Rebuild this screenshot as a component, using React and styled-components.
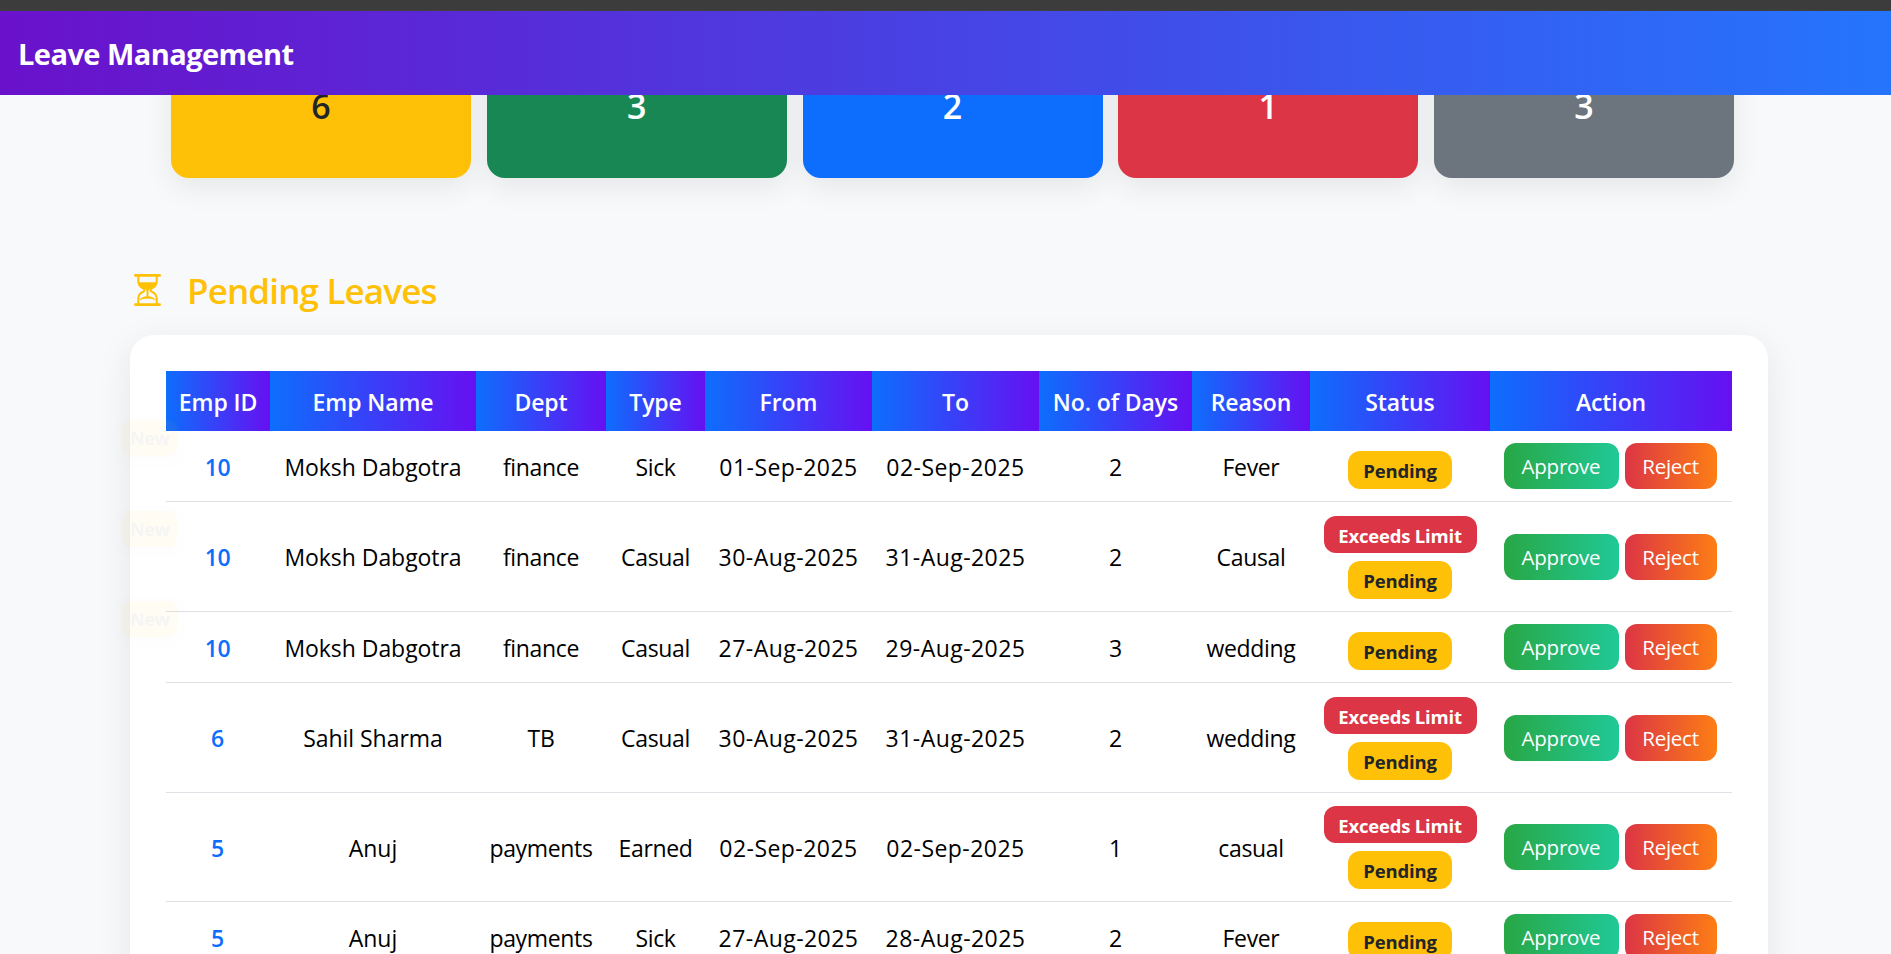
import React from "react";
import styled, { createGlobalStyle } from "styled-components";

const GlobalStyle = createGlobalStyle`
  * { box-sizing: border-box; }
  html, body { margin: 0; height: 100%; overflow: hidden; }
  body {
    background: #f8f9fb;
    color: #000;
    font-family: "Segoe UI", "Open Sans", "Noto Sans", sans-serif;
    font-size: 23px;
  }
`;

const Page = styled.div`
  height: 954px;
  overflow: hidden;
  display: flex;
  flex-direction: column;
`;

const WindowEdge = styled.div`
  flex: none;
  height: 11px;
  background: #3c3c3c;
  border-bottom: 1px solid #404040;
`;

const Navbar = styled.header`
  flex: none;
  height: 84px;
  padding: 0 18px;
  display: flex;
  align-items: center;
  background: linear-gradient(90deg, #6a11cb, #2575fc);
`;

const Brand = styled.h1`
  margin: 0;
  color: #fff;
  font-size: 29px;
  line-height: 40px;
  font-weight: 700;
  letter-spacing: -0.55px;
  padding-top: 1px;
`;

const Viewport = styled.main`
  flex: 1;
  min-height: 0;
  overflow: hidden;
  padding: 0 123px 0 130px;
`;

const Summary = styled.section`
  display: grid;
  grid-template-columns: repeat(5, 300px);
  justify-content: space-between;
  margin: -80px 34px 0 41px;
`;

const tones = {
  total: ["#ffc107", "#212529"],
  approved: ["#198754", "#fff"],
  info: ["#0d6efd", "#fff"],
  rejected: ["#dc3545", "#fff"],
  neutral: ["#6c757d", "#fff"],
};

const SummaryCard = styled.div`
  height: 163px;
  display: flex;
  justify-content: center;
  align-items: flex-end;
  padding-bottom: 49px;
  border-radius: 18px;
  background: ${(p) => tones[p.$tone][0]};
  color: ${(p) => tones[p.$tone][1]};
  box-shadow: 0 9px 30px rgba(0, 0, 0, 0.08);
  font-size: 34px;
  line-height: 46px;
  font-weight: 600;
`;

const SectionTitle = styled.h2`
  display: flex;
  align-items: center;
  margin: 86px 0 0;
  height: 53px;
  color: #ffc107;
  font-size: 35px;
  font-weight: 600;
  letter-spacing: -0.85px;
  line-height: 53px;
`;

const TitleIcon = styled.svg`
  width: 27px;
  height: 32px;
  margin: 0 26px 2px 4px;
`;

const Panel = styled.section`
  margin-top: 18px;
  padding: 36px;
  height: 700px;
  border-radius: 24px;
  background: #fff;
  box-shadow: 0 9px 36px rgba(0, 0, 0, 0.08);
`;

const columns = "104px 206px 130px 99px 167px 167px 153px 118px 180px 242px";

const HeadRow = styled.div`
  display: grid;
  grid-template-columns: ${columns};
  height: 60px;
`;

const HeadCell = styled.div`
  display: flex;
  align-items: center;
  justify-content: center;
  padding-top: 2px;
  background: linear-gradient(90deg, #0d6efd, #6610f2);
  color: #fff;
  font-weight: 600;
  letter-spacing: -0.1px;
  white-space: nowrap;
`;

const Row = styled.div`
  position: relative;
  display: grid;
  grid-template-columns: ${columns};
  height: ${(p) => p.$h}px;
  border-bottom: 1px solid #dee2e6;
`;

const Cell = styled.div`
  display: flex;
  align-items: center;
  justify-content: center;
  padding-top: 1px;
  letter-spacing: ${(p) => (p.$kind === "date" ? 0.45 : p.$kind === "name" ? -0.05 : -0.35)}px;
  white-space: nowrap;
`;

const IdCell = styled(Cell)`
  padding-right: 1px;
  color: #0d6efd;
  font-weight: 600;
`;

const StatusCell = styled.div`
  display: flex;
  flex-direction: column;
  align-items: center;
  justify-content: flex-end;
  gap: 8px;
  padding-bottom: 12px;
`;

const Badge = styled.span`
  display: flex;
  align-items: center;
  justify-content: center;
  width: ${(p) => (p.$danger ? 153 : 104)}px;
  height: ${(p) => (p.$danger ? 37 : 38)}px;
  padding-top: 1px;
  border-radius: 12px;
  background: ${(p) => (p.$danger ? "#dc3545" : "#ffc107")};
  color: ${(p) => (p.$danger ? "#fff" : "#212529")};
  font-size: 18.5px;
  font-weight: 700;
  letter-spacing: -0.2px;
  white-space: nowrap;
`;

const ActionCell = styled.div`
  display: flex;
  align-items: center;
  justify-content: center;
  gap: 6px;
  padding-right: 2px;
`;

const ActionButton = styled.button`
  width: ${(p) => (p.$reject ? 92 : 115)}px;
  height: 46px;
  padding: 0;
  border: 0;
  border-radius: 12px;
  background: ${(p) =>
    p.$reject
      ? "linear-gradient(90deg, #dc3545, #fd7e14)"
      : "linear-gradient(90deg, #28a745, #20c997)"};
  color: #fff;
  font-family: inherit;
  font-size: 20.5px;
  letter-spacing: -0.25px;
`;

const NewTag = styled.span`
  position: absolute;
  left: -45px;
  top: calc(50% - 46px);
  z-index: 1;
  width: 56px;
  height: 36px;
  padding-left: 9px;
  border-radius: 9px;
  background: #ffc107;
  color: #212529;
  font-size: 18px;
  line-height: 36px;
  font-weight: 700;
  letter-spacing: -0.4px;
  box-shadow: 0 3px 9px rgba(0, 0, 0, 0.2);
  opacity: 0.04;
`;

const summary = [
  ["total", 6],
  ["approved", 3],
  ["info", 2],
  ["rejected", 1],
  ["neutral", 3],
];

const headings = ["Emp ID", "Emp Name", "Dept", "Type", "From", "To", "No. of Days", "Reason", "Status", "Action"];

const kinds = ["name", "text", "text", "date", "date", "text", "text"];

const leaves = [
  { id: 10, cells: ["Moksh Dabgotra", "finance", "Sick", "01-Sep-2025", "02-Sep-2025", 2, "Fever"], h: 71, fresh: true },
  { id: 10, cells: ["Moksh Dabgotra", "finance", "Casual", "30-Aug-2025", "31-Aug-2025", 2, "Causal"], h: 110, fresh: true, exceeds: true },
  { id: 10, cells: ["Moksh Dabgotra", "finance", "Casual", "27-Aug-2025", "29-Aug-2025", 3, "wedding"], h: 71, fresh: true },
  { id: 6, cells: ["Sahil Sharma", "TB", "Casual", "30-Aug-2025", "31-Aug-2025", 2, "wedding"], h: 110, exceeds: true },
  { id: 5, cells: ["Anuj", "payments", "Earned", "02-Sep-2025", "02-Sep-2025", 1, "casual"], h: 109, exceeds: true },
  { id: 5, cells: ["Anuj", "payments", "Sick", "27-Aug-2025", "28-Aug-2025", 2, "Fever"], h: 71 },
];

function Hourglass() {
  return (
    <TitleIcon viewBox="0 0 27 32" fill="none" stroke="currentColor" aria-hidden="true">
      <path d="M1.3 1.4h24.4M1.3 30.6h24.4" strokeWidth="2.6" strokeLinecap="round" />
      <path
        d="M4.3 2v5.2c0 3.7 2.2 6 5.2 7.3 1.3.6 1.3 2.4 0 3-3 1.300-5.200 3.600-5.200 7.300V30M22.700 2v5.200c0 3.700-2.200 6-5.200 7.300-1.300.6-1.300 2.400 0 3 3 1.300 5.200 3.600 5.200 7.300V30"
        strokeWidth="2"
      />
      <path
        d="M4.600 8.300h17.800c-.6 3-2.700 4.900-5.400 6.200-1.500.7-2.500 1.200-2.500 3v4.800c4 .3 6.300 2 7.500 4.200-2.300-1.300-5-1.700-8.500-1.700s-6.200.4-8.500 1.700c1.200-2.200 3.500-3.900 7.500-4.200v-4.800c0-1.800-1-2.300-2.500-3-2.700-1.300-4.800-3.200-5.400-6.200Z"
        fill="currentColor"
        stroke="none"
      />
    </TitleIcon>
  );
}

function LeaveRow({ leave }) {
  return (
    <Row $h={leave.h}>
      {leave.fresh && <NewTag>New</NewTag>}
      <IdCell>{leave.id}</IdCell>
      {leave.cells.map((value, i) => (
        <Cell key={i} $kind={kinds[i]}>{value}</Cell>
      ))}
      <StatusCell>
        {leave.exceeds && <Badge $danger>Exceeds Limit</Badge>}
        <Badge>Pending</Badge>
      </StatusCell>
      <ActionCell>
        <ActionButton>Approve</ActionButton>
        <ActionButton $reject>Reject</ActionButton>
      </ActionCell>
    </Row>
  );
}

export default function App() {
  return (
    <Page>
      <GlobalStyle />
      <WindowEdge />
      <Navbar>
        <Brand>Leave Management</Brand>
      </Navbar>
      <Viewport>
        <Summary>
          {summary.map(([tone, count]) => (
            <SummaryCard key={tone} $tone={tone}>{count}</SummaryCard>
          ))}
        </Summary>
        <SectionTitle>
          <Hourglass />
          Pending Leaves
        </SectionTitle>
        <Panel>
          <HeadRow>
            {headings.map((h) => (
              <HeadCell key={h}>{h}</HeadCell>
            ))}
          </HeadRow>
          {leaves.map((leave, i) => (
            <LeaveRow key={i} leave={leave} />
          ))}
        </Panel>
      </Viewport>
    </Page>
  );
}
